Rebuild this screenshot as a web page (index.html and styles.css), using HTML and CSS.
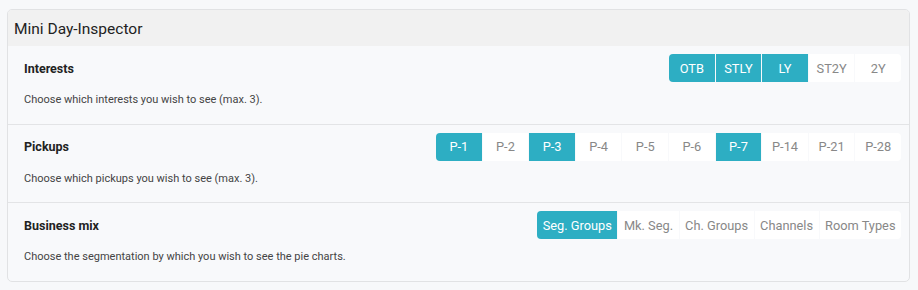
FILE: index.html
```html
<!DOCTYPE html>
<html lang="en">
<head>
  <meta charset="UTF-8">
  <title>Mini Day-Inspector</title>
  <link rel="stylesheet" href="styles.css">
</head>
<body>
  <div class="card">
    <div class="card-header">Mini Day-Inspector</div>

    <!-- Interests -->
    <div class="section">
      <div class="row">
        <span class="section-title">Interests</span>
        <div class="btn-group">
          <button class="btn active">OTB</button>
          <button class="btn active">STLY</button>
          <button class="btn active">LY</button>
          <button class="btn">ST2Y</button>
          <button class="btn">2Y</button>
        </div>
      </div>
      <p class="hint">Choose which interests you wish to see (max. 3).</p>
    </div>

    <!-- Pickups -->
    <div class="section">
      <div class="row">
        <span class="section-title">Pickups</span>
        <div class="btn-group">
          <button class="btn active">P-1</button>
          <button class="btn">P-2</button>
          <button class="btn active">P-3</button>
          <button class="btn">P-4</button>
          <button class="btn">P-5</button>
          <button class="btn">P-6</button>
          <button class="btn active">P-7</button>
          <button class="btn">P-14</button>
          <button class="btn">P-21</button>
          <button class="btn">P-28</button>
        </div>
      </div>
      <p class="hint">Choose which pickups you wish to see (max. 3).</p>
    </div>

    <!-- Business mix -->
    <div class="section">
      <div class="row">
        <span class="section-title">Business mix</span>
        <div class="btn-group">
          <button class="btn active">Seg. Groups</button>
          <button class="btn">Mk. Seg.</button>
          <button class="btn">Ch. Groups</button>
          <button class="btn">Channels</button>
          <button class="btn">Room Types</button>
        </div>
      </div>
      <p class="hint">Choose the segmentation by which you wish to see the pie charts.</p>
    </div>
  </div>
</body>
</html>
```

FILE: styles.css
```css
body {
  margin: 0;
  padding: 9px 8px 0 7px;
  background-color: #f7f8fa;
  font-family: Roboto, "Liberation Sans", sans-serif;
  color: #222;
}

.card {
  border: 1px solid #e1e2e4;
  border-radius: 5px;
  background-color: #f8f9fb;
  overflow: hidden;
}

.card-header {
  height: 36px;
  line-height: 38px;
  padding-left: 6px;
  font-size: 15.5px;
  color: #222;
  background-color: #f1f1f1;
}

.section {
  padding: 8px 8px 15.5px 16px;
  border-bottom: 1px solid #e3e4e6;
}

.section:last-child {
  border-bottom: none;
  padding-bottom: 16px;
}

.row {
  display: flex;
  align-items: center;
  justify-content: space-between;
  height: 28px;
}

.section-title {
  font-size: 12.5px;
  font-weight: bold;
  color: #222;
}

.hint {
  margin: 10px 0 0;
  font-size: 11px;
  line-height: 16px;
  color: #444;
}

/* Button group */
.btn-group {
  display: flex;
  gap: 1px;
}

.btn {
  min-width: 45.6px;
  height: 28px;
  padding: 0 5.5px;
  border: none;
  background-color: #fff;
  color: #888;
  font-family: inherit;
  font-size: 12.8px;
  cursor: pointer;
}

.btn.active {
  background-color: #2daec3;
  color: #fff;
}

.btn:first-child {
  border-radius: 4px 0 0 4px;
}

.btn:last-child {
  border-radius: 0 4px 4px 0;
}
```
